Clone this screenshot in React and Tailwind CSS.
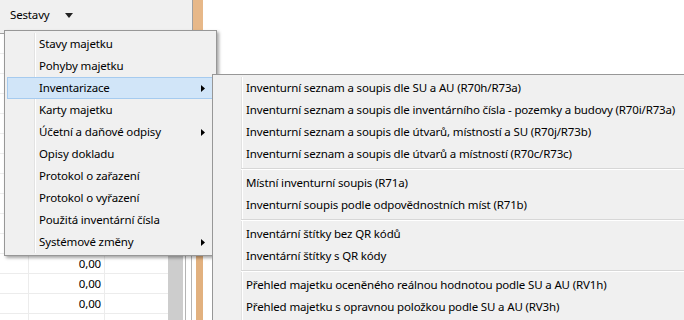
import React from 'react';

const mainItems = [
    { label: 'Stavy majetku' },
    { label: 'Pohyby majetku' },
    { label: 'Inventarizace', sub: true, active: true },
    { label: 'Karty majetku' },
    { label: 'Účetní a daňové odpisy', sub: true },
    { label: 'Opisy dokladu' },
    { label: 'Protokol o zařazení' },
    { label: 'Protokol o vyřazení' },
    { label: 'Použitá inventární čísla' },
    { label: 'Systémové změny', sub: true },
];

// null = separator
const subItems = [
    'Inventurní seznam a soupis dle SU a AU (R70h/R73a)',
    'Inventurní seznam a soupis dle inventárního čísla - pozemky a budovy (R70i/R73a)',
    'Inventurní seznam a soupis dle útvarů, místností a SU (R70j/R73b)',
    'Inventurní seznam a soupis dle útvarů a místností (R70c/R73c)',
    null,
    'Místní inventurní soupis (R71a)',
    'Inventurní soupis podle odpovědnostních míst (R71b)',
    null,
    'Inventární štítky bez QR kódů',
    'Inventární štítky s QR kódy',
    null,
    'Přehled majetku oceněného reálnou hodnotou podle SU a AU (RV1h)',
    'Přehled majetku s opravnou položkou podle SU a AU (RV3h)',
];

const rows = Array.from({ length: 15 }, (_, i) => i);

function Arrow() {
    return (
        <svg width="4" height="7" viewBox="0 0 4 7" className="shrink-0">
            <path d="M0 0 L4 3.5 L0 7 Z" fill="#000" />
        </svg>
    );
}

function App() {
    return (
        <div
            className="relative w-[684px] h-[320px] overflow-hidden flex bg-white text-black text-[11.5px] tracking-[-0.15px]"
            style={{ fontFamily: '"Noto Sans", "Open Sans", sans-serif' }}
        >
            {/* Left panel */}
            <div className="w-[193px] flex flex-col shrink-0">
                <div className="h-[34px] bg-[#f0f0f0] border-r border-b border-[#a0a0a0] flex items-start pt-[6px] pl-[10px] gap-[15px] shrink-0">
                    <span>Sestavy</span>
                    <svg width="8" height="5" viewBox="0 0 8 5" className="mt-[7px]">
                        <path d="M0 0 L8 0 L4 5 Z" fill="#222" />
                    </svg>
                </div>
                <div className="flex flex-1">
                    <div className="w-[168px] flex flex-col bg-white">
                        {rows.map((r) => (
                            <div key={r} className="h-[20px] shrink-0 flex border-b border-[#ececec]">
                                <div className="w-[29px] border-r border-[#ececec]" />
                                <div className="w-[76px] border-r border-[#ececec] flex items-center justify-end pr-[3px]">
                                    {r > 10 ? '0,00' : ''}
                                </div>
                                <div className="flex-1" />
                            </div>
                        ))}
                    </div>
                    <div className="w-[15px] bg-[#cdcdcd]" />
                    <div className="w-[2px] bg-white" />
                    <div className="w-[7px] bg-white border-l border-r border-[#b4b4b4]" />
                    <div className="w-[1px] bg-white" />
                </div>
            </div>

            {/* Splitter */}
            <div className="w-[11px] flex flex-col shrink-0">
                <div className="h-[34px] bg-[#e7b889] mr-[1px]" />
                <div className="flex-1 flex">
                    <div className="w-[3px] bg-white" />
                    <div className="w-[7px] bg-[#e2b17f]" />
                    <div className="w-[1px] bg-white" />
                </div>
            </div>

            {/* Right panel */}
            <div className="flex-1 bg-white" />

            {/* Main menu */}
            <div className="absolute left-[4px] top-[30px] w-[213px] bg-[#f0f0f0] border border-[#979797] p-[2px] shadow-[2px_2px_3px_rgba(0,0,0,0.35)]">
                <div className="absolute left-[29px] top-[2px] bottom-[2px] w-[2px] border-l border-[#e2e2e2] border-r border-r-white" />
                {mainItems.map((it) => (
                    <div
                        key={it.label}
                        className={
                            'relative h-[22px] flex items-center pl-[31px] pr-[8px] border ' +
                            (it.active ? 'bg-[#d1e5f8] border-[#a6cbef]' : 'border-transparent')
                        }
                    >
                        <span className="flex-1 whitespace-nowrap">{it.label}</span>
                        {it.sub && <Arrow />}
                    </div>
                ))}
            </div>

            {/* Submenu */}
            <div className="absolute left-[212px] top-[74px] w-[490px] bg-[#f0f0f0] border border-[#979797] p-[2px]">
                <div className="absolute left-[28px] top-[2px] bottom-[-20px] w-[2px] border-l border-[#e2e2e2] border-r border-r-white" />
                {subItems.map((t, i) =>
                    t === null ? (
                        <div key={i} className="relative h-[7px] flex items-center pl-[26px]">
                            <div className="flex-1 h-[2px] border-t border-[#d7d7d7] border-b border-b-white" />
                        </div>
                    ) : (
                        <div key={i} className="relative h-[22px] flex items-center pl-[31px] whitespace-nowrap">
                            {t}
                        </div>
                    )
                )}
            </div>
        </div>
    );
}

export default App;
